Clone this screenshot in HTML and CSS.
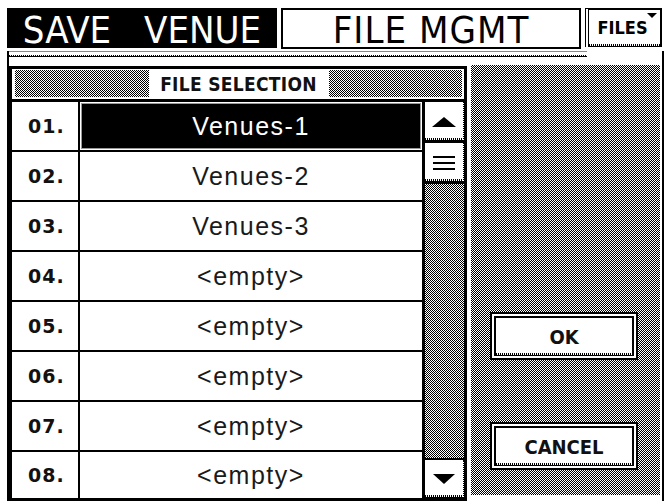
FILE: index.html
```html
<!DOCTYPE html>
<html>
<head>
<meta charset="utf-8">
<link rel="stylesheet" href="styles.css">
</head>
<body>
<div class="header">
  <div class="hd-black">SAVE VENUE</div>
  <div class="hd-white">FILE MGMT</div>
  <div class="hd-files jag">FILES<span class="tri"></span></div>
</div>
<div class="frame">
  <div class="strip"><div class="strip-line"></div></div>
  <div class="main">
    <div class="list">
      <div class="list-title"><div class="title-hatch hatch"><span class="list-label">FILE SELECTION</span></div></div>
      <div class="list-body">
        <div class="rows">
          <div class="row"><div class="num">01.</div><div class="name name-sel"><div class="hl">Venues-1</div></div></div>
          <div class="row"><div class="num">02.</div><div class="name">Venues-2</div></div>
          <div class="row"><div class="num">03.</div><div class="name">Venues-3</div></div>
          <div class="row"><div class="num">04.</div><div class="name">&lt;empty&gt;</div></div>
          <div class="row"><div class="num">05.</div><div class="name">&lt;empty&gt;</div></div>
          <div class="row"><div class="num">06.</div><div class="name">&lt;empty&gt;</div></div>
          <div class="row"><div class="num">07.</div><div class="name">&lt;empty&gt;</div></div>
          <div class="row"><div class="num">08.</div><div class="name">&lt;empty&gt;</div></div>
        </div>
        <div class="scroll">
          <div class="sbtn up jag"><svg width="24" height="10" viewBox="0 0 24 10"><polygon points="12,0 24,10 0,10" fill="#000"/></svg></div>
          <div class="sbtn thumb jag"><svg width="22" height="15" viewBox="0 0 22 15"><rect x="0" y="0" width="22" height="2" fill="#000"/><rect x="0" y="6" width="22" height="2" fill="#000"/><rect x="0" y="12" width="22" height="2" fill="#000"/></svg></div>
          <div class="track hatch"></div>
          <div class="sbtn down jag"><svg width="22" height="10" viewBox="0 0 22 10"><polygon points="0,0 22,0 11,10" fill="#000"/></svg></div>
        </div>
      </div>
    </div>
    <div class="side hatch">
      <div class="btn"><div class="btn-in jag">OK</div></div>
      <div class="btn btn-cancel"><div class="btn-in jag">CANCEL</div></div>
    </div>
  </div>
</div>
</body>
</html>
```
FILE: styles.css
```css
html, body {
  margin: 0;
  padding: 0;
  background: #fff;
}
body {
  width: 667px;
  height: 501px;
  overflow: hidden;
  font-family: "Liberation Sans", Arial, sans-serif;
  color: #000;
}

.hatch {
  background-color: #fff;
  background-image: repeating-conic-gradient(#000 0 25%, transparent 0 50%);
  background-size: 2px 2px;
}

.jag {
  background-color: #fff;
  background-image:
    linear-gradient(#000, #000),
    repeating-linear-gradient(90deg, #000 0 1px, transparent 1px 2px);
  background-size: 100% 1px, 100% 2px;
  background-position: 0 100%, 0 calc(100% - 1px);
  background-repeat: no-repeat;
}

/* Header */
.header {
  display: flex;
  align-items: flex-start;
  padding: 8px 0 0 7px;
  height: 41px;
  box-sizing: content-box;
}
.hd-black,
.hd-white {
  font-family: "DejaVu Sans Condensed", "DejaVu Sans", sans-serif;
  font-stretch: condensed;
  font-size: 38px;
  line-height: 40px;
  height: 40px;
  box-sizing: border-box;
  display: flex;
  align-items: center;
  justify-content: center;
  white-space: nowrap;
  padding-top: 3px;
}
.hd-black {
  width: 270px;
  background: #000;
  color: #fff;
  word-spacing: 22px;
}
.hd-white {
  margin-left: 4px;
  width: 300px;
  height: 41px;
  border: 2px solid #000;
  background: #fff;
  color: #000;
  letter-spacing: 1px;
}
.hd-files {
  position: relative;
  margin-left: 4px;
  width: 77px;
  height: 39px;
  box-sizing: border-box;
  border-top: 2px solid #000;
  border-right: 2px solid #000;
  border-left: 4px double #000;
  display: flex;
  align-items: center;
  justify-content: center;
  font-family: "DejaVu Sans Condensed", "DejaVu Sans", sans-serif;
  font-stretch: condensed;
  font-weight: bold;
  font-size: 18px;
  padding: 0 4px 2px 0;
}
.tri {
  position: absolute;
  top: 3px;
  right: 3px;
  width: 0;
  height: 0;
  border-left: 5px solid transparent;
  border-right: 5px solid transparent;
  border-top: 5px solid #000;
}

/* Frame */
.frame {
  margin-left: 7px;
  width: 657px;
  height: 452px;
  box-sizing: border-box;
  border-left: 2px solid #000;
  border-right: 2px solid #000;
  border-bottom: 2px solid #000;
}
.strip {
  height: 15px;
}
.strip-line {
  margin-top: 2px;
  width: 578px;
  height: 5px;
  border-top: 1px solid #888;
  background-image:
    linear-gradient(#000, #000),
    repeating-linear-gradient(90deg, #000 0 1px, transparent 1px 2px);
  background-size: 100% 1px, 100% 1px;
  background-position: 0 100%, 0 calc(100% - 1px);
  background-repeat: no-repeat;
}
.main {
  display: flex;
  align-items: flex-start;
  height: 435px;
}

/* List panel */
.list {
  width: 458px;
  height: 435px;
  box-sizing: border-box;
  border: 3px solid #000;
}
.list-title {
  height: 30px;
  box-sizing: border-box;
  padding: 1px 2px 2px 3px;
}
.title-hatch {
  height: 27px;
  display: flex;
  align-items: center;
  justify-content: center;
}
.list-label {
  width: 180px;
  height: 27px;
  background: #fff;
  display: flex;
  align-items: center;
  justify-content: center;
  font-family: "DejaVu Sans Condensed", "DejaVu Sans", sans-serif;
  font-stretch: condensed;
  font-weight: bold;
  font-size: 19px;
  letter-spacing: 0.3px;
  color: #111;
}
.list-body {
  display: flex;
  height: 396px;
  border-top: 3px solid #000;
}
.rows {
  width: 410px;
}
.row {
  display: flex;
  height: 48px;
  border-bottom: 2px solid #000;
}
.row:last-child {
  height: 46px;
  border-bottom: none;
}
.num {
  border-right: 2px solid #000;
  display: flex;
  align-items: center;
  padding-left: 16px;
  box-sizing: content-box;
  width: 50px;
  font-family: "DejaVu Sans", sans-serif;
  font-weight: bold;
  font-size: 19px;
  letter-spacing: 1px;
  color: #111;
}
.name {
  flex: 1;
  display: flex;
  align-items: center;
  justify-content: center;
  font-size: 25px;
  letter-spacing: 1.5px;
  color: #1a1a1a;
}
.name-sel {
  padding: 2px;
  align-items: stretch;
}
.hl {
  flex: 1;
  background: #000;
  color: #fff;
  display: flex;
  align-items: center;
  justify-content: center;
  box-shadow: 0 0 0 1px #999;
}

/* Scrollbar */
.scroll {
  width: 42px;
  box-sizing: border-box;
  border-left: 3px solid #000;
  background: #000;
  display: flex;
  flex-direction: column;
  gap: 2px;
}
.sbtn {
  display: flex;
  align-items: center;
  justify-content: center;
  border-right: 1px dotted #000;
  box-sizing: border-box;
}
.up {
  height: 39px;
}
.thumb {
  height: 39px;
  padding-top: 1px;
}
.down {
  height: 38px;
}
.track {
  flex: 1;
}

/* Side panel */
.side {
  margin-left: 4px;
  margin-top: -1px;
  width: 189px;
  height: 430px;
  box-sizing: border-box;
  padding: 247px 0 0 19px;
}
.btn {
  width: 148px;
  height: 48px;
  box-sizing: border-box;
  border: 2px solid #000;
  padding: 2px;
  background: #fff;
}
.btn-cancel {
  margin-top: 62px;
}
.btn-in {
  height: 100%;
  box-sizing: border-box;
  border: 2px solid #000;
  border-bottom: none;
  display: flex;
  align-items: center;
  justify-content: center;
  font-family: "DejaVu Sans Condensed", "DejaVu Sans", sans-serif;
  font-stretch: condensed;
  font-weight: bold;
  font-size: 20px;
  color: #111;
  padding-bottom: 1px;
}
```
